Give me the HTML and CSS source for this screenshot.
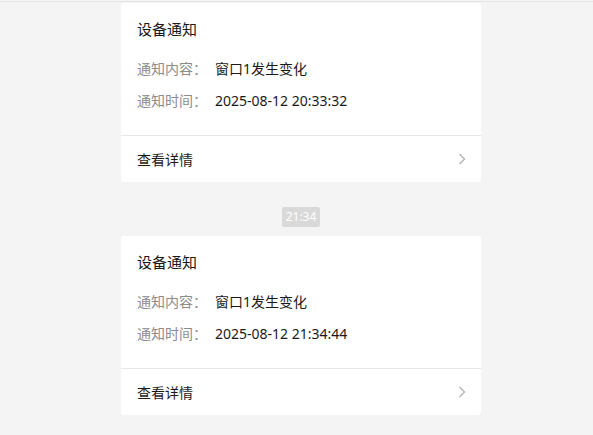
FILE: index.html
```html
<!DOCTYPE html>
<html lang="zh-CN">

<head>
    <meta charset="UTF-8">
    <meta name="viewport" content="width=device-width, initial-scale=1.0">
    <title>设备通知</title>
    <link rel="stylesheet" href="styles.css">
</head>

<body>
    <div class="topline"></div>
    <div id="feed">
        <div class="card">
            <div class="card-body">
                <div class="card-title">设备通知</div>
                <div class="row">
                    <span class="label">通知内容：</span>
                    <span class="value">窗口1发生变化</span>
                </div>
                <div class="row">
                    <span class="label">通知时间：</span>
                    <span class="value">2025-08-12 20:33:32</span>
                </div>
            </div>
            <div class="card-foot">
                <span>查看详情</span>
                <svg class="arrow" width="8" height="12" viewBox="0 0 8 12">
                    <polyline points="1.5,1 6.5,6 1.5,11" fill="none" stroke="#b2b2b2" stroke-width="1.3" />
                </svg>
            </div>
        </div>

        <div class="time"><span>21:34</span></div>

        <div class="card">
            <div class="card-body">
                <div class="card-title">设备通知</div>
                <div class="row">
                    <span class="label">通知内容：</span>
                    <span class="value">窗口1发生变化</span>
                </div>
                <div class="row">
                    <span class="label">通知时间：</span>
                    <span class="value">2025-08-12 21:34:44</span>
                </div>
            </div>
            <div class="card-foot">
                <span>查看详情</span>
                <svg class="arrow" width="8" height="12" viewBox="0 0 8 12">
                    <polyline points="1.5,1 6.5,6 1.5,11" fill="none" stroke="#b2b2b2" stroke-width="1.3" />
                </svg>
            </div>
        </div>
    </div>
</body>

</html>
```

FILE: styles.css
```css
body {
    margin: 0;
    background-color: #f4f4f4;
    font-family: "Noto Sans", "Noto Sans CJK SC", sans-serif;
    color: #1a1a1a;
}

.topline {
    height: 1px;
    margin-top: 1px;
    background-color: #e4e4e4;
}

#feed {
    width: 360px;
    margin-left: 121px;
    padding-top: 1px;
}

.card {
    background-color: #fff;
    border-radius: 3px;
}

.card-body {
    padding: 15px 16px 18px;
    border-bottom: 1px solid #e8e8e8;
}

.card-title {
    font-size: 15px;
    line-height: 22px;
    margin-bottom: 13px;
}

.row {
    display: flex;
    font-size: 14px;
    line-height: 20px;
    padding: 6px 0;
}

.row .label {
    width: 78px;
    color: #8c8c8c;
}

.row .value {
    color: #1a1a1a;
}

.card-foot {
    display: flex;
    align-items: center;
    justify-content: space-between;
    height: 46px;
    padding: 0 15px 0 16px;
    font-size: 14px;
}

.time {
    display: flex;
    justify-content: center;
    padding: 25px 0 9px;
}

.time span {
    font-size: 12px;
    line-height: 20px;
    padding: 0 4px;
    color: #fff;
    background-color: #d9d9d9;
    border-radius: 2px;
}
```
